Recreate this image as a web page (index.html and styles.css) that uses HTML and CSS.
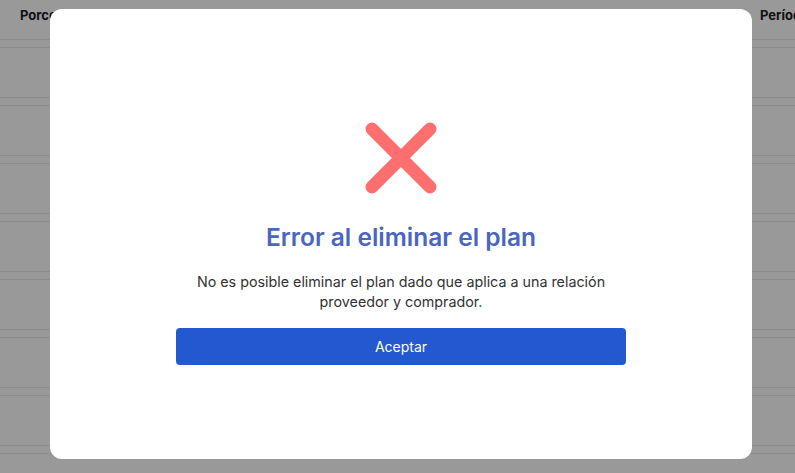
FILE: index.html
```
<!DOCTYPE html>
<html lang="es">

<head>
    <meta charset="UTF-8">
    <meta name="viewport" content="width=device-width, initial-scale=1.0">
    <title>Planes</title>
    <link rel="stylesheet" href="styles.css">
</head>

<body>
    <div class="table">
        <div class="table-head">
            <span class="col col-first">Porcentaje</span>
            <span class="col">Condición</span>
            <span class="col">Días de pago</span>
            <span class="col">Aplicación</span>
            <span class="col col-last">Período</span>
        </div>
        <div class="table-row"></div>
        <div class="table-row"></div>
        <div class="table-row"></div>
        <div class="table-row"></div>
        <div class="table-row"></div>
        <div class="table-row"></div>
        <div class="table-row"></div>
        <div class="table-row"></div>
    </div>

    <div class="overlay">
        <div class="modal">
            <svg class="error-icon" width="72" height="72" viewBox="0 0 72 72">
                <line x1="7" y1="7" x2="65" y2="65" stroke="#ff6f6f" stroke-width="13" stroke-linecap="round" />
                <line x1="65" y1="7" x2="7" y2="65" stroke="#ff6f6f" stroke-width="13" stroke-linecap="round" />
            </svg>
            <h2 class="modal-title">Error al eliminar el plan</h2>
            <p class="modal-text">No es posible eliminar el plan dado que aplica a una relación proveedor y comprador.</p>
            <button class="modal-btn">Aceptar</button>
        </div>
    </div>
</body>

</html>
```

FILE: styles.css
```
body {
    margin: 0;
    font-family: Inter, "Liberation Sans", sans-serif;
    background: #fff;
    color: #333;
    overflow: hidden;
}

.table {
    display: flex;
    flex-direction: column;
    gap: 7px;
    height: 473px;
    overflow: hidden;
}

.table-head {
    display: flex;
    flex-shrink: 0;
    justify-content: space-between;
    height: 40px;
    box-sizing: border-box;
    border-bottom: 1px solid #ececec;
    padding: 7px 0 0 20px;
}

.col {
    font-size: 13px;
    font-weight: 700;
    color: #1b1b2b;
}

.col-last {
    width: 35px;
    overflow: hidden;
    white-space: nowrap;
}

.table-row {
    flex-shrink: 0;
    height: 51px;
    box-sizing: border-box;
    border-top: 1px solid #ececec;
    border-bottom: 1px solid #ececec;
}

.overlay {
    position: fixed;
    inset: 0;
    background: rgba(0, 0, 0, 0.4);
    display: flex;
    align-items: flex-start;
    padding: 9px 43px 0 50px;
}

.modal {
    flex: 1;
    height: 450px;
    background: #fff;
    border-radius: 12px;
    display: flex;
    flex-direction: column;
    align-items: center;
    padding-top: 113px;
    box-sizing: border-box;
}

.modal-title {
    margin: 28px 0 0;
    font-size: 24.5px;
    line-height: 30px;
    font-weight: 600;
    color: #4a66c2;
}

.modal-text {
    width: 450px;
    margin: 20px 0 0;
    font-size: 14.3px;
    line-height: 20px;
    text-align: center;
    color: #333;
}

.modal-btn {
    width: 450px;
    height: 37px;
    margin-top: 16px;
    border: none;
    border-radius: 4px;
    background: #2458d1;
    color: #fff;
    font-family: inherit;
    font-size: 14px;
    cursor: pointer;
}
```
